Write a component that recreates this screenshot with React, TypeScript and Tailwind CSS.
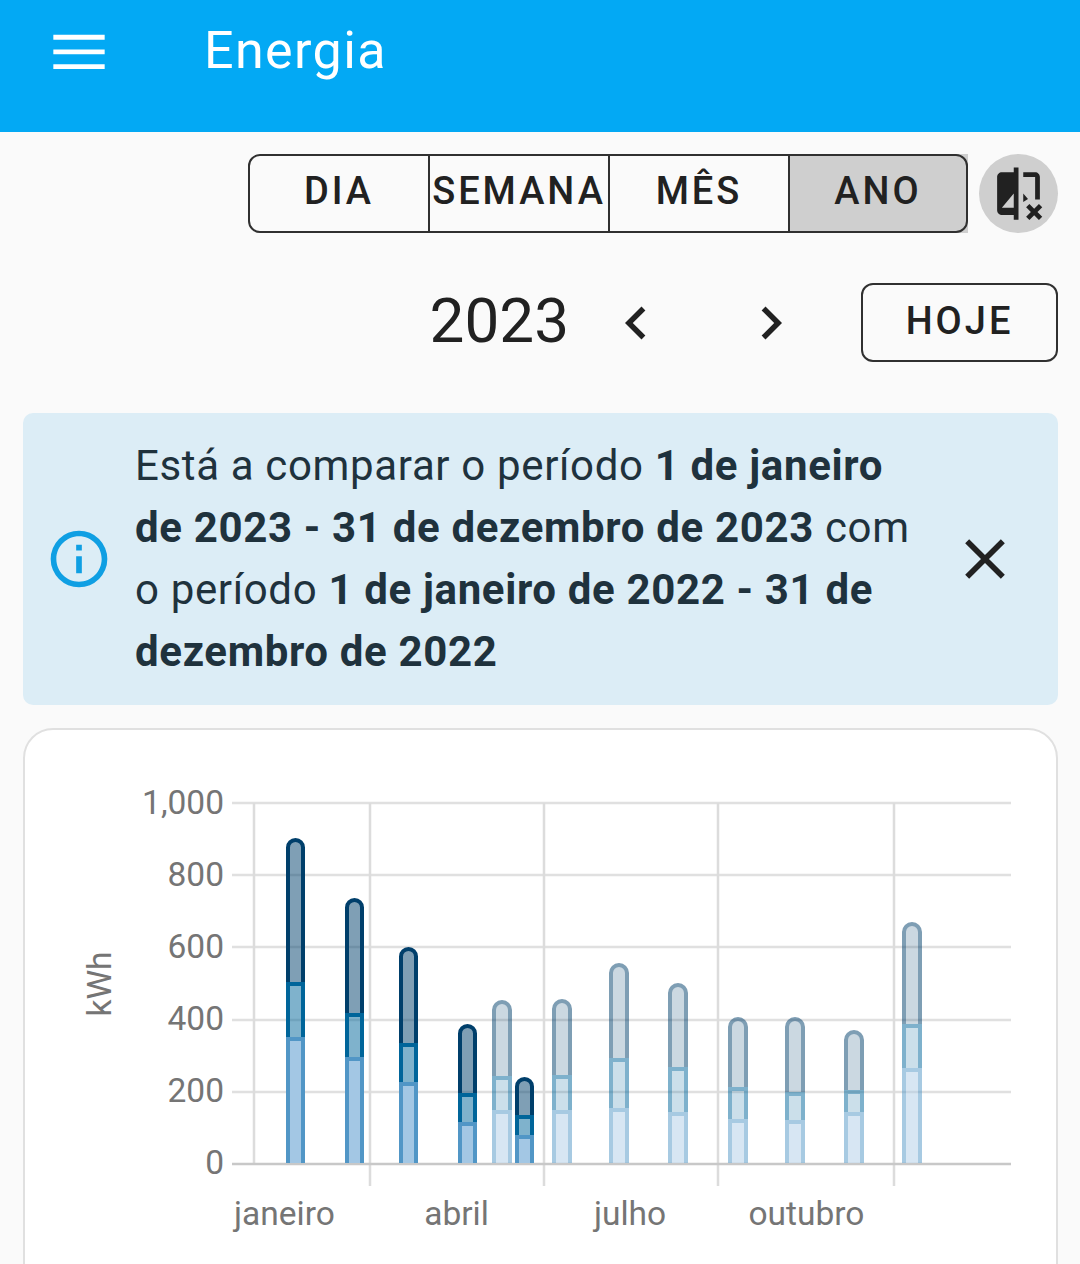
import React from 'react';

const font = { fontFamily: 'Roboto, sans-serif' };

const tabs = ['DIA', 'SEMANA', 'MÊS', 'ANO'];

// [left, top, first split, second split]; outer box of each stacked bar
const currentBars = [
  [286, 838, 984, 1039],
  [345, 898, 1015, 1059],
  [399, 947, 1045, 1084],
  [458, 1024, 1095, 1124],
  [515, 1077, 1117, 1137],
];
const compareBars = [
  [492, 1000, 1078, 1112],
  [552, 999, 1077, 1112],
  [609, 963, 1060, 1110],
  [668, 983, 1069, 1114],
  [728, 1017, 1089, 1121],
  [785, 1017, 1094, 1122],
  [844, 1030, 1092, 1114],
  [902, 922, 1026, 1070],
];

const yLabels = [
  ['1,000', 803],
  ['800', 875],
  ['600', 947],
  ['400', 1019],
  ['200', 1091],
  ['0', 1163],
];

const Bar = ({ bar, faded }: { bar: number[]; faded?: boolean }) => {
  const [x, top, a, b] = bar;
  const w = faded ? 20 : 19;
  const bottom = 1163;
  const r = w / 2;
  const s = 2;
  return (
    <g opacity={faded ? 0.5 : 1} strokeWidth="4">
      <path
        d={`M${x + s} ${a}V${top + r}a${r - s} ${r - s} 0 0 1 ${w - 4} 0V${a}Z`}
        fill="#003f6b"
        fillOpacity={faded ? 0.4 : 0.5}
        stroke="#003f6b"
      />
      <path d={`M${x + s} ${a}V${b}M${x + w - s} ${b}V${a}`} fill="none" stroke="#00659a" />
      <rect x={x} y={a - s} width={w} height="4" fill="#00659a" stroke="none" />
      <rect x={x + 4} y={a + s} width={w - 8} height={b - a - 4} fill="#00659a" fillOpacity={faded ? 0.4 : 0.5} />
      <path d={`M${x + s} ${b}V${bottom}M${x + w - s} ${bottom}V${b}`} fill="none" stroke="#5196c6" />
      <rect x={x} y={b - s} width={w} height="4" fill="#5196c6" stroke="none" />
      <rect x={x + 4} y={b + s} width={w - 8} height={bottom - b - s} fill="#a3c7e4" fillOpacity={faded ? 0.85 : 1} />
    </g>
  );
};

const Chart = () => (
  <svg width="1080" height="1264" viewBox="0 0 1080 1264" className="absolute left-[-25px] top-[-730px]">
    {[803, 875, 947, 1020, 1092].map((y) => (
      <line key={y} x1="232" x2="1011" y1={y} y2={y} stroke="#e0e0e0" strokeWidth="2.5" />
    ))}
    {[254, 370, 544, 718, 894].map((x) => (
      <line key={x} x1={x} x2={x} y1="803" y2={x === 254 ? 1164 : 1186} stroke="#dcdcdc" strokeWidth="2.5" />
    ))}
    <line x1="232" x2="1011" y1="1164" y2="1164" stroke="#c8c8c8" strokeWidth="2.5" />
    {compareBars.map((b) => (
      <Bar key={b[0]} bar={b} faded />
    ))}
    {currentBars.map((b) => (
      <Bar key={b[0]} bar={b} />
    ))}
    <g fill="#757575" fontSize="33.5" style={font}>
      {yLabels.map(([label, y]) => (
        <text key={label} x="224" y={Number(y) + 11} textAnchor="end">
          {label}
        </text>
      ))}
      <text x="284.5" y="1225" textAnchor="middle">janeiro</text>
      <text x="456.5" y="1225" textAnchor="middle">abril</text>
      <text x="630" y="1225" textAnchor="middle">julho</text>
      <text x="806.5" y="1225" textAnchor="middle">outubro</text>
      <text transform="translate(111 984) rotate(-90)" textAnchor="middle">kWh</text>
    </g>
  </svg>
);

export default function App() {
  return (
    <div className="h-[1264px] w-[1080px] overflow-hidden bg-[#fafafa]" style={font}>
      <header className="flex h-[132px] items-start bg-[#03a9f4] text-white">
        <svg width="56" height="56" viewBox="0 0 24 24" fill="white" className="ml-[51px] mt-[24px]">
          <path d="M1 4.6h22v2.1H1zM1 10.9h22V13H1zM1 17.2h22v2.1H1z" />
        </svg>
        <h1 className="ml-[97px] mt-[19px] text-[52px] leading-[64px] font-normal tracking-[1.4px]">Energia</h1>
      </header>

      <div className="mt-[22px] flex items-start justify-end gap-[11px] pr-[22px]">
        {/* the selected tab's grey is square, it shows outside the rounded corners */}
        <div className="w-[720px] bg-[linear-gradient(to_right,transparent_540px,#cfcfcf_540px)]">
          <div className="flex h-[79px] rounded-[12px] border-2 border-[#303030]">
            {tabs.map((t) => (
              <div
                key={t}
                className="flex w-[180px] items-center justify-center border-r-2 border-[#303030] pb-[4px] text-[38px] font-medium tracking-[3px] text-[#212121] last:w-[176px] last:border-r-0"
              >
                {t}
              </div>
            ))}
          </div>
        </div>
        <div className="flex h-[79px] w-[79px] items-center justify-center rounded-full bg-[#cfcfcf]">
          <svg width="57" height="57" viewBox="0 0 24 24" fill="#212121">
            <path d="M10 3H5C3.9 3 3 3.9 3 5V19C3 20.1 3.9 21 5 21H10V23H12V1H10V3ZM10 18H5L10 12V18Z" />
            <path d="M14 3H19C20.1 3 21 3.9 21 5V14.5H19V5H14V3ZM14 12L16 14.3L14 15.6V12Z" />
            <path d="M16.6 16.4L18.6 18.4L20.6 16.4L22 17.8L20 19.8L22 21.8L20.6 23.2L18.6 21.2L16.6 23.2L15.2 21.8L17.2 19.8L15.2 17.8L16.6 16.4Z" />
          </svg>
        </div>
      </div>

      <div className="mt-[50px] flex h-[79px] items-center justify-end pr-[22px]">
        <span className="pb-[4px] text-[62px] leading-none text-[#212121]">2023</span>
        <svg width="66" height="66" viewBox="0 0 24 24" fill="#212121" className="ml-[34px]">
          <path d="M15.41 16.58L10.83 12l4.58-4.59L14 6l-6 6 6 6z" />
        </svg>
        <svg width="66" height="66" viewBox="0 0 24 24" fill="#212121" className="ml-[69px]">
          <path d="M8.59 16.58L13.17 12 8.59 7.41 10 6l6 6-6 6z" />
        </svg>
        <div className="ml-[57px] flex h-[79px] w-[197px] items-center justify-center rounded-[12px] border-2 border-[#303030] pb-[3px] text-[38px] font-medium tracking-[3px] text-[#212121]">
          HOJE
        </div>
      </div>

      <div className="ml-[23px] mr-[22px] mt-[51px] flex h-[292px] items-center rounded-[10px] bg-[#dcedf6] text-[#1f323d]">
        <svg width="68" height="68" viewBox="0 0 24 24" fill="#0f9fe3" className="ml-[22px] shrink-0">
          <path d="M11 9h2V7h-2m1 13c-4.41 0-8-3.59-8-8s3.59-8 8-8 8 3.59 8 8-3.59 8-8 8m0-18A10 10 0 0 0 2 12a10 10 0 0 0 10 10 10 10 0 0 0 10-10A10 10 0 0 0 12 2m-1 15h2v-6h-2v6z" />
        </svg>
        <p className="ml-[22px] w-[791px] text-[42px] leading-[62px] tracking-[0.65px]">
          Está a comparar o período <b className="font-bold">1 de janeiro de 2023 - 31 de dezembro de 2023</b> com o
          período <b className="font-bold">1 de janeiro de 2022 - 31 de dezembro de 2022</b>
        </p>
        <svg width="68" height="68" viewBox="0 0 24 24" fill="#212121" className="ml-auto mr-[39px] shrink-0">
          <path d="M19 6.41L17.59 5 12 10.59 6.41 5 5 6.41 10.59 12 5 17.59 6.41 19 12 13.41 17.59 19 19 17.59 13.41 12z" />
        </svg>
      </div>

      <div className="relative ml-[23px] mr-[22px] mt-[23px] h-[600px] overflow-hidden rounded-[30px] border-2 border-[#e0e0e0] bg-white">
        <Chart />
      </div>
    </div>
  );
}
